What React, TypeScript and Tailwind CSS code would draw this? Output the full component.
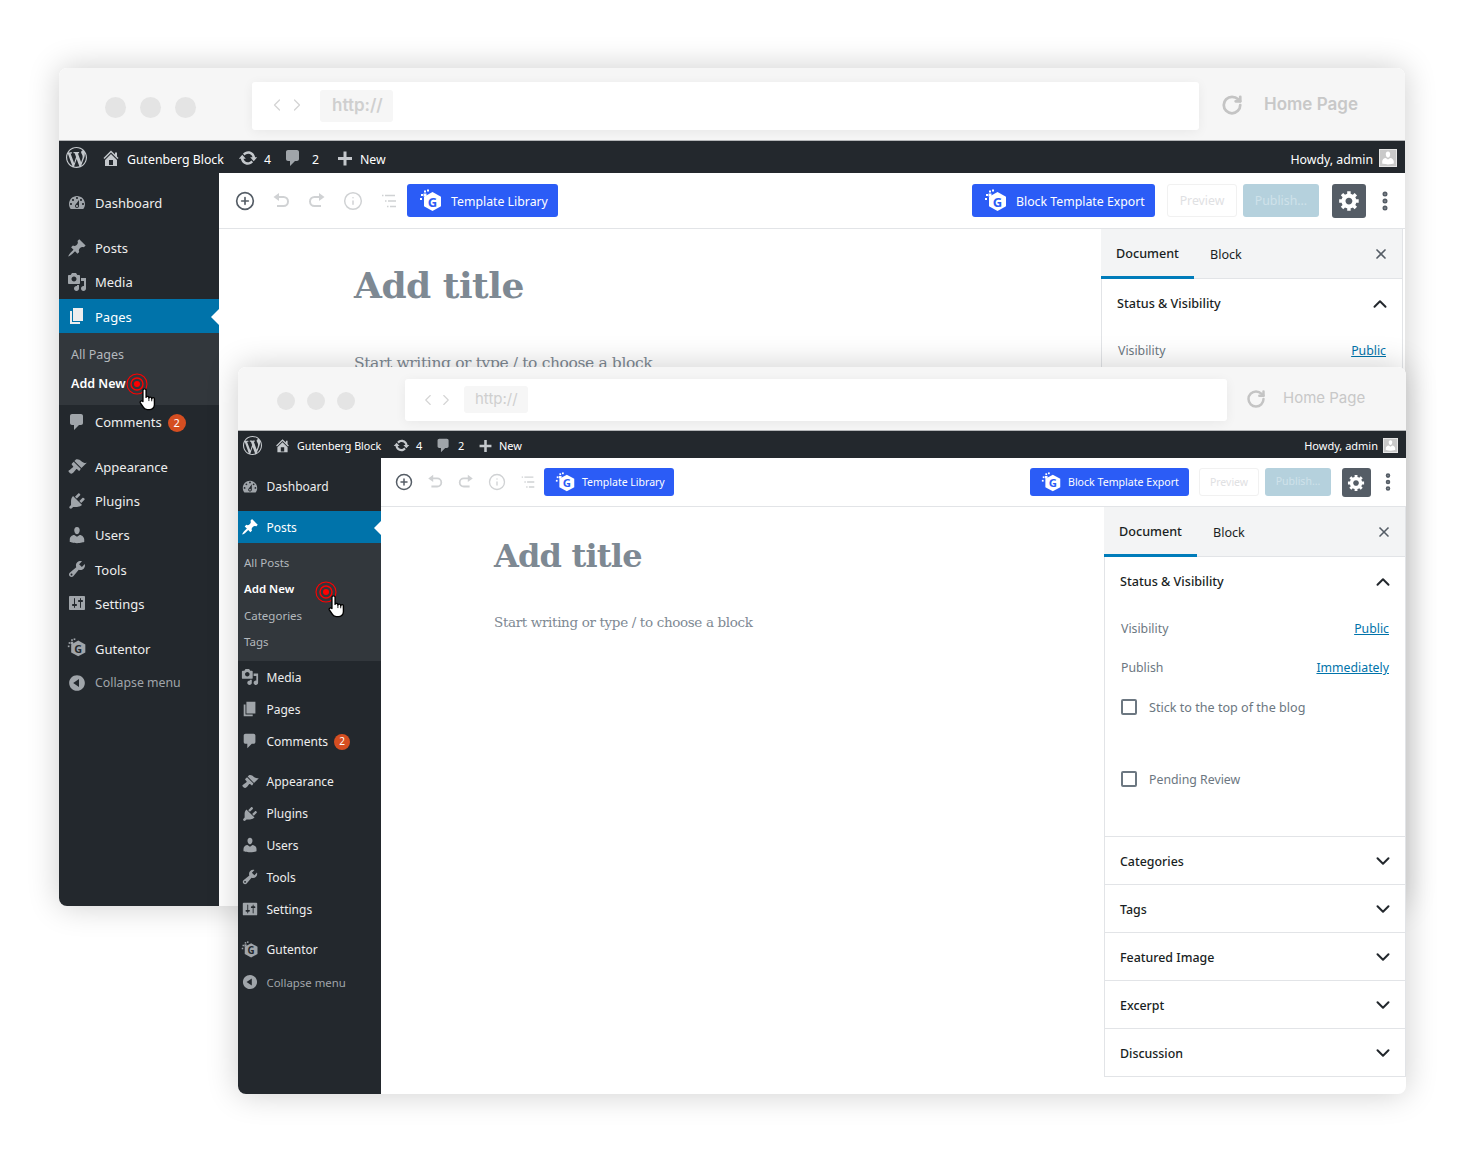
import { ChevronDown, ChevronLeft, ChevronRight, ChevronUp, CirclePlus, EllipsisVertical, Info, RotateCw, X } from 'lucide-react'

const paths = {
  dashboard:
    'M3.76 16h12.48c1.1-1.37 1.76-3.11 1.76-5 0-4.42-3.58-8-8-8s-8 3.58-8 8c0 1.89.66 3.63 1.76 5zM10 4c.55 0 1 .45 1 1s-.45 1-1 1-1-.45-1-1 .45-1 1-1zM6 6c.55 0 1 .45 1 1s-.45 1-1 1-1-.45-1-1 .45-1 1-1zm8 0c.55 0 1 .45 1 1s-.45 1-1 1-1-.45-1-1 .45-1 1-1zm-5.37 5.55L12 7v6c0 1.1-.9 2-2 2s-2-.9-2-2c0-.57.24-1.08.63-1.45zM4 10c.55 0 1 .45 1 1s-.45 1-1 1-1-.45-1-1 .45-1 1-1zm12 0c.55 0 1 .45 1 1s-.45 1-1 1-1-.45-1-1 .45-1 1-1zm-5 3c0-.55-.45-1-1-1s-1 .45-1 1 .45 1 1 1 1-.45 1-1z',
  pin: 'M10.44 3.02l1.82-1.82 6.36 6.35-1.83 1.82c-1.05-.68-2.48-.57-3.41.36l-.75.75c-.92.93-1.04 2.35-.35 3.41l-1.83 1.82-2.41-2.41-2.8 2.79c-.42.42-3.38 2.71-3.8 2.29s1.86-3.39 2.28-3.81l2.79-2.79L4.1 9.36l1.83-1.82c1.05.69 2.48.57 3.4-.36l.75-.75c.93-.92 1.05-2.35.36-3.41z',
  media:
    'M13 11V4c0-.55-.45-1-1-1h-1.67L9 1H5L3.67 3H2c-.55 0-1 .45-1 1v7c0 .55.45 1 1 1h10c.55 0 1-.45 1-1zM7 4.5c1.38 0 2.5 1.12 2.5 2.5S8.38 9.5 7 9.5 4.5 8.38 4.5 7 5.62 4.5 7 4.5zM14 6h5v10.5c0 1.38-1.12 2.5-2.5 2.5S14 17.88 14 16.5s1.12-2.5 2.5-2.5c.17 0 .34.02.5.05V9h-3V6zm-4 8.05V13h2v3.5c0 1.38-1.12 2.5-2.5 2.5S7 17.88 7 16.5 8.12 14 9.5 14c.17 0 .34.02.5.05z',
  page: 'M6 15V2h10v13H6zm-1 1h8v2H3V5h2v11z',
  comment: 'M5 2h9c1.1 0 2 .9 2 2v7c0 1.1-.9 2-2 2h-2l-5 5v-5H5c-1.1 0-2-.9-2-2V4c0-1.1.9-2 2-2z',
  appearance:
    'M14.48 11.06L7.41 3.99l1.5-1.5c.5-.56 2.3-.47 3.51.32 1.21.8 1.43 1.28 2.91 2.1 1.18.64 2.45 1.26 4.45.85zm-.71.71L6.7 4.7 4.93 6.47c-.39.39-.39 1.02 0 1.41l1.06 1.06c.39.39.39 1.03 0 1.42-.6.6-1.43 1.11-2.21 1.69-.35.26-.7.53-1.01.84C1.43 13.23.91 14.1 2.43 15.6c.1.1.21.2.32.29 1.46 1.27 2.59.81 3.67-.27.31-.31.58-.66.84-1.01.58-.78 1.09-1.61 1.69-2.21.39-.39 1.02-.39 1.41 0l1.06 1.06c.39.39 1.02.39 1.41 0z',
  plugins:
    'M13.11 4.36L9.87 7.6 8 5.73l3.24-3.24c.35-.34 1.05-.2 1.56.32.52.51.66 1.21.31 1.55zm-8 1.77l.91-1.12 9.01 9.01-1.19.84c-.71.71-2.63 1.16-3.82 1.16H6.14L4.9 17.26c-.59.59-1.54.59-2.12 0-.59-.58-.59-1.53 0-2.12l1.24-1.24v-3.88c0-1.13.4-3.19 1.09-3.89zm7.26 3.97l3.24-3.24c.34-.35 1.04-.21 1.55.31.52.51.66 1.21.31 1.55l-3.24 3.25z',
  users:
    'M10 9.25c-2.27 0-2.73-3.44-2.73-3.44C7 4.02 7.82 2 9.97 2c2.16 0 2.98 2.02 2.71 3.81 0 0-.41 3.44-2.68 3.44zm0 2.57L12.72 10c2.39 0 4.52 2.33 4.52 4.53v2.49s-3.65 1.13-7.24 1.13c-3.65 0-7.24-1.13-7.24-1.13v-2.49c0-2.25 1.94-4.48 4.47-4.48z',
  tools:
    'M16.68 9.77c-1.34 1.34-3.3 1.67-4.95.99l-5.41 6.52c-.99.99-2.59.99-3.58 0s-.99-2.59 0-3.57l6.52-5.42c-.68-1.65-.35-3.61.99-4.95 1.28-1.28 3.12-1.62 4.72-1.06l-2.89 2.89 2.82 2.82 2.86-2.87c.53 1.58.18 3.39-1.08 4.65zM3.81 16.21c.4.39 1.04.39 1.43 0 .4-.4.4-1.04 0-1.43-.39-.4-1.03-.4-1.43 0-.39.39-.39 1.03 0 1.43z',
  settings:
    'M18 16V4c0-.55-.45-1-1-1H3c-.55 0-1 .45-1 1v12c0 .55.45 1 1 1h14c.55 0 1-.45 1-1zM8 11h1c.55 0 1 .45 1 1s-.45 1-1 1H8v1.5c0 .28-.22.5-.5.5s-.5-.22-.5-.5V13H6c-.55 0-1-.45-1-1s.45-1 1-1h1V5.500c0-.28.22-.5.5-.5s.5.22.5.5V11zm5-2h-1c-.55 0-1-.45-1-1s.45-1 1-1h1V5.500c0-.28.22-.5.5-.5s.5.22.5.5V7h1c.55 0 1 .45 1 1s-.45 1-1 1h-1v5.500c0 .28-.22.5-.5.5s-.5-.22-.5-.5V9z',
  collapse:
    'M10 2.16c4.33 0 7.84 3.51 7.84 7.84s-3.51 7.84-7.84 7.84S2.16 14.33 2.16 10 5.67 2.16 10 2.16zm2 11.72V6.12L6.18 9.97z',
  update:
    'M10.2 3.28c3.53 0 6.43 2.61 6.92 6h2.08l-3.5 4-3.5-4h2.32c-.45-1.97-2.21-3.44-4.32-3.44-1.45 0-2.73.71-3.54 1.78L4.95 5.66C6.23 4.2 8.11 3.28 10.2 3.28zm-.4 13.44c-3.52 0-6.43-2.61-6.92-6H.8l3.5-4c1.17 1.33 2.33 2.67 3.5 4H5.48c.45 1.97 2.21 3.44 4.32 3.44 1.45 0 2.73-.71 3.54-1.78l1.71 1.95c-1.28 1.46-3.15 2.39-5.25 2.39z',
  home: 'M16 8.5l1.53 1.53-1.06 1.06L10 4.62l-6.47 6.47-1.06-1.06L10 2.5l4 4v-2h2v4zm-6-2.46l6 5.99V18H4v-5.97zM12 17v-5H8v5h4z',
  plus: 'M17 9v3h-5.500v5.500h-3V12H3V9h5.500V3.500h3V9H17z',
  wp: 'M20 10c0-5.51-4.49-10-10-10C4.48 0 0 4.49 0 10c0 5.52 4.48 10 10 10 5.51 0 10-4.48 10-10zM7.78 15.37L4.37 6.22c.55-.02 1.17-.08 1.17-.08.5-.06.44-1.13-.06-1.11 0 0-1.45.11-2.37.11-.18 0-.37 0-.58-.01C4.12 2.69 6.89 1.03 10 1.03c2.32 0 4.43.87 6.03 2.34-.68-.11-1.65.39-1.65 1.58 0 .74.45 1.36.9 2.1.35.61.55 1.36.55 2.46 0 1.49-1.4 5-1.4 5l-3.03-8.37c.54-.02.82-.17.82-.17.5-.05.44-1.25-.06-1.22 0 0-1.44.12-2.38.12-.87 0-2.33-.12-2.33-.12-.5-.03-.56 1.2-.06 1.22l.92.08 1.26 3.41zM17.41 10c.24-.64.74-1.87.43-4.25.7 1.29 1.05 2.71 1.05 4.25 0 3.29-1.73 6.24-4.4 7.78.97-2.59 1.94-5.21 2.92-7.78zM6.1 18.09C3.12 16.65 1.11 13.53 1.11 10c0-1.3.23-2.48.72-3.59C3.25 10.3 4.67 14.2 6.1 18.09zm4.03-6.63l2.58 6.98c-.86.29-1.76.45-2.71.45-.79 0-1.57-.11-2.29-.33.81-2.38 1.62-4.74 2.42-7.1z',
  gear: 'M18 12h-2.18c-.17.7-.44 1.35-.81 1.93l1.54 1.54-2.1 2.1-1.54-1.54c-.58.36-1.23.64-1.91.81V19H8v-2.180c-.68-.17-1.33-.45-1.91-.81l-1.54 1.54-2.12-2.12 1.54-1.54c-.36-.58-.63-1.22-.8-1.89H1V9h2.18c.17-.7.44-1.35.81-1.93L2.450 5.530l2.100-2.100 1.540 1.540c.58-.36 1.230-.64 1.910-.81V2h3v2.180c.68.17 1.330.45 1.910.81l1.540-1.540 2.120 2.120-1.540 1.540c.36.58.63 1.220.8 1.890H18v3zm-8.500 1.500c1.660 0 3-1.340 3-3s-1.340-3-3-3-3 1.340-3 3 1.340 3 3 3z',
}

type IconName = keyof typeof paths

function Dash({ name, className }: { name: IconName; className?: string }) {
  return (
    <svg viewBox="0 0 20 20" className={className} fill="currentColor" fillRule="evenodd">
      <path d={paths[name]} />
    </svg>
  )
}

function GutentorLogo({ className, fg, bg }: { className?: string; fg: string; bg: string }) {
  return (
    <svg viewBox="0 0 24 24" className={className}>
      <path d="M13.500 3l8.500 4.700v9.600L13.500 22 5 17.300V7.700z" fill={fg} />
      <rect x="2" y="5" width="2" height="2" fill={fg} />
      <rect x="5" y="1.500" width="2" height="2" fill={fg} />
      <rect x="8" y="0.500" width="2" height="2" fill={fg} />
      <rect x="1" y="9" width="2" height="2" fill={fg} />
      <rect x="4.500" y="4.500" width="3" height="3" fill={fg} />
      <text x="13.500" y="17.500" textAnchor="middle" fontSize="13" fontWeight="700" fontFamily="'Noto Sans', sans-serif" fill={bg}>
        G
      </text>
    </svg>
  )
}

function Target({ className }: { className?: string }) {
  return (
    <svg viewBox="0 0 22 22" className={className}>
      <circle cx="11" cy="11" r="10" fill="none" stroke="#f00" strokeWidth="1.100" />
      <circle cx="11" cy="11" r="6" fill="none" stroke="#f00" strokeWidth="1.400" />
      <circle cx="11" cy="11" r="3" fill="#f00" />
    </svg>
  )
}

function Hand({ className }: { className?: string }) {
  return (
    <svg viewBox="0 0 16 22" preserveAspectRatio="none" className={className} fill="#fff" stroke="#000" strokeWidth="1.200" strokeLinejoin="round">
      <path d="M3.500 2.200a1.400 1.400 0 0 1 2.800 0V9a1.300 1.300 0 0 1 2.500 0v.6a1.300 1.300 0 0 1 2.500.1v.7a1.200 1.200 0 0 1 2.400.2V16c0 2.500-2 4.800-4.500 4.800H7.500c-1.500 0-2.600-.7-3.400-2L1.200 14.200c-.7-1.300.9-2.500 2.300-1.200z" />
      <path d="M8.800 9v3.500M11.300 9.700v3M13.700 10.600v2.400" fill="none" strokeWidth="0.800" />
    </svg>
  )
}

function ListIcon({ className }: { className?: string }) {
  return (
    <svg viewBox="0 0 20 20" className={className} fill="none" stroke="currentColor" strokeWidth="1.500">
      <path d="M3 4.500h1.500M6 4.500h10M6 10h1.500M9 10h8M8 15.500h1.500M11 15.500h6" />
    </svg>
  )
}

const variants = {
  back: {
    root: 'left-[59px] top-[68px] w-[1346px] h-[838px]',
    chrome: 'h-[73px] border-b border-[#b4b6b8]',
    dots: 'w-[193px] gap-[14px] pl-[46px] mt-[6px]',
    dot: 'size-[21px]',
    url: 'w-[947px] h-[48px] pl-[15px] mt-[3px]',
    navIcon: 'size-[20px] mt-[-2px]',
    nav: 'w-[53px] gap-0',
    chip: 'w-[73px] h-[32px] text-[17px] font-semibold pl-[12px]',
    reload: 'ml-[22px] size-[22px] mt-[2px]',
    home: 'ml-[21px] text-[17px] font-semibold mt-[2px]',
    bar: 'h-[32px] text-[12.300px] pl-[7px] pr-[8px] pt-[7px]',
    wp: 'size-[21px] mt-[-6px]',
    homeIcon: 'size-[20px] ml-[14px] mt-[-6px]',
    barTitle: 'ml-[6px] w-[108px]',
    barIcon: 'size-[20px] mt-[-6px]',
    updates: 'gap-[6px] w-[45px]',
    comments: 'gap-[9px] w-[52px]',
    news: 'gap-[5px]',
    howdy: 'gap-[6px]',
    avatar: 'size-[18px] mt-[-6px]',
    body: 'h-[733px]',
    side: 'w-[160px] pt-[13px]',
    row: 'h-[34.100px] text-[13px] pl-[8px] pt-[2px]',
    dimLabel: 'text-[12.300px]',
    rowIcon: 'size-[20px] mr-[8px] mt-[-2px]',
    gap: 'mt-[11px]',
    sub: 'pl-[12px] pt-[7.500px] pb-[6px] text-[12.500px]',
    subRow: 'h-[29px]',
    arrow: 'border-y-[8px] border-r-[8px]',
    badge: 'size-[18px] ml-[6px] text-[11px]',
    toolbar: 'h-[56px] pl-[16px] pr-[8px]',
    toolIcon: 'size-[20px]',
    tools: 'gap-[16px]',
    tplBtn: 'w-[151px] h-[33px] ml-[8px] text-[12.300px] pl-[12px] gap-[8px]',
    exportBtn: 'w-[183px] h-[33px] text-[12.300px] pl-[12px] gap-[8px]',
    btnText: 'pt-[3px]',
    logo: 'size-[24px]',
    right: 'gap-[12px]',
    preview: 'w-[70px] h-[33px] text-[12.300px] pt-[2px]',
    publish: 'w-[76px] h-[33px] text-[12.300px] ml-[-6px] pt-[1px]',
    gearBtn: 'size-[34px] ml-[1px]',
    gear: 'size-[23px]',
    dotsBtn: 'size-[24px] ml-[-5px]',
    content: 'pl-[135px] pt-[30px]',
    title: 'text-[36px] leading-[52px] tracking-[-0.500px]',
    lead: 'mt-[40px] text-[15.500px] leading-[24px] tracking-[-0.370px]',
    panel: 'w-[302px] mr-[2px]',
  },
  front: {
    root: 'left-[238px] top-[367px] w-[1168px] h-[727px]',
    chrome: 'h-[64px] border-b border-[#b4b6b8]',
    dots: 'w-[167px] gap-[12px] pl-[39px] mt-[4px]',
    dot: 'size-[18px]',
    url: 'w-[822px] h-[42px] pl-[14px] mt-[2px]',
    navIcon: 'size-[18px]',
    nav: 'w-[45px] gap-0',
    chip: 'w-[64px] h-[27px] text-[15px] pl-[11px]',
    reload: 'ml-[19px] size-[20px]',
    home: 'ml-[17px] text-[15px]',
    bar: 'h-[27px] text-[11px] pl-[5px] pr-[8px] pt-[4px]',
    wp: 'size-[19px] mt-[-3px]',
    homeIcon: 'size-[17px] ml-[12px] mt-[-3px]',
    barTitle: 'ml-[6px] w-[93px] text-[10.700px]',
    barIcon: 'size-[17px] mt-[-3px]',
    updates: 'gap-[6px] w-[42px]',
    comments: 'gap-[6px] w-[42px]',
    news: 'gap-[5px]',
    howdy: 'gap-[5px]',
    avatar: 'size-[15px] mt-[-3px]',
    body: 'h-[636px]',
    side: 'w-[143px] pt-[12px]',
    row: 'h-[31.800px] text-[12px] pl-[3px] pt-[2.500px]',
    dimLabel: 'text-[11.400px]',
    rowIcon: 'size-[18px] mr-[7.500px] mt-[-1px]',
    gap: 'mt-[9px]',
    sub: 'pl-[6px] pt-[7px] pb-[6px] text-[11.500px]',
    subRow: 'h-[26.300px]',
    arrow: 'border-y-[7px] border-r-[7px]',
    badge: 'size-[16px] ml-[6px] text-[10px]',
    toolbar: 'h-[49px] pl-[14px] pr-[7px]',
    toolIcon: 'size-[18px]',
    tools: 'gap-[13px]',
    tplBtn: 'w-[130px] h-[28px] ml-[7px] text-[10.500px] pl-[11px] gap-[6px]',
    exportBtn: 'w-[159px] h-[28px] text-[10.600px] pl-[11px] gap-[6px]',
    btnText: 'pt-[2px]',
    logo: 'size-[21px]',
    right: 'gap-[10px]',
    preview: 'w-[60px] h-[28px] text-[10.500px] pt-[2px]',
    publish: 'w-[66px] h-[28px] text-[10.500px] ml-[-4px]',
    gearBtn: 'size-[29px] ml-[1px]',
    gear: 'size-[19px]',
    dotsBtn: 'size-[22px] ml-[-4px]',
    content: 'pl-[113px] pt-[25px]',
    title: 'text-[32px] leading-[48px] tracking-[-0.800px]',
    lead: 'mt-[31px] text-[13.500px] leading-[22px] tracking-[-0.350px]',
    panel: 'w-[302px]',
  },
}

type V = (typeof variants)['back']

type MenuItem = { icon: IconName | 'gutentor'; label: string; gap?: boolean; badge?: boolean; dim?: boolean; active?: boolean; sub?: string[] }

const backMenu: MenuItem[] = [
  { icon: 'dashboard', label: 'Dashboard' },
  { icon: 'pin', label: 'Posts', gap: true },
  { icon: 'media', label: 'Media' },
  { icon: 'page', label: 'Pages', active: true, sub: ['All Pages', 'Add New'] },
  { icon: 'comment', label: 'Comments', badge: true },
  { icon: 'appearance', label: 'Appearance', gap: true },
  { icon: 'plugins', label: 'Plugins' },
  { icon: 'users', label: 'Users' },
  { icon: 'tools', label: 'Tools' },
  { icon: 'settings', label: 'Settings' },
  { icon: 'gutentor', label: 'Gutentor', gap: true },
  { icon: 'collapse', label: 'Collapse menu', dim: true },
]

const frontMenu: MenuItem[] = [
  { icon: 'dashboard', label: 'Dashboard' },
  { icon: 'pin', label: 'Posts', gap: true, active: true, sub: ['All Posts', 'Add New', 'Categories', 'Tags'] },
  { icon: 'media', label: 'Media' },
  { icon: 'page', label: 'Pages' },
  { icon: 'comment', label: 'Comments', badge: true },
  { icon: 'appearance', label: 'Appearance', gap: true },
  { icon: 'plugins', label: 'Plugins' },
  { icon: 'users', label: 'Users' },
  { icon: 'tools', label: 'Tools' },
  { icon: 'settings', label: 'Settings' },
  { icon: 'gutentor', label: 'Gutentor', gap: true },
  { icon: 'collapse', label: 'Collapse menu', dim: true },
]

function BrowserChrome({ v }: { v: V }) {
  return (
    <div className={`flex items-center bg-[#f6f6f6] rounded-t-[8px] ${v.chrome}`}>
      <div className={`flex items-center shrink-0 ${v.dots}`}>
        <span className={`rounded-full bg-[#e4e4e4] ${v.dot}`} />
        <span className={`rounded-full bg-[#e4e4e4] ${v.dot}`} />
        <span className={`rounded-full bg-[#e4e4e4] ${v.dot}`} />
      </div>
      <div className={`flex items-center bg-white rounded-[3px] shadow-[0_2px_12px_rgba(0,0,0,0.06)] ${v.url}`}>
        <div className={`flex items-center text-[#d4d4d4] ${v.nav}`}>
          <ChevronLeft className={v.navIcon} strokeWidth={1.500} />
          <ChevronRight className={v.navIcon} strokeWidth={1.500} />
        </div>
        <div className={`flex items-center rounded-[3px] bg-[#f6f6f6] text-[#cfcfcf] ${v.chip}`} style={{ fontFamily: 'Inter, sans-serif' }}>
          http://
        </div>
      </div>
      <RotateCw className={`text-[#c4c4c4] ${v.reload}`} strokeWidth={3} />
      <span className={`text-[#c8c8c8] ${v.home}`} style={{ fontFamily: 'Inter, sans-serif' }}>
        Home Page
      </span>
    </div>
  )
}

function AdminBar({ v }: { v: V }) {
  return (
    <div className={`flex items-center justify-between whitespace-nowrap bg-[#23282d] text-white ${v.bar}`}>
      <div className="flex items-center">
        <Dash name="wp" className={`text-[#c4c8cc] ${v.wp}`} />
        <Dash name="home" className={`text-[#c4c8cc] ${v.homeIcon}`} />
        <span className={v.barTitle}>Gutenberg Block</span>
        <span className={`flex items-center ${v.updates} ml-[3px]`}>
          <Dash name="update" className={`text-[#c4c8cc] ${v.barIcon}`} />4
        </span>
        <span className={`flex items-center ${v.comments}`}>
          <Dash name="comment" className={`text-[#a0a5aa] ${v.barIcon}`} />2
        </span>
        <span className={`flex items-center ${v.news}`}>
          <Dash name="plus" className={`text-[#c4c8cc] ${v.barIcon}`} />
          New
        </span>
      </div>
      <div className={`flex items-center ${v.howdy}`}>
        Howdy, admin
        <span className={`flex items-end justify-center overflow-hidden bg-[#c9c9c9] border border-[#e5e5e5] ${v.avatar}`}>
          <Dash name="users" className="size-full text-white" />
        </span>
      </div>
    </div>
  )
}

function SideMenu({ v, items, isBack }: { v: V; items: MenuItem[]; isBack: boolean }) {
  return (
    <aside className={`shrink-0 bg-[#23282d] ${v.side}`}>
      {items.map((item) => (
        <div key={item.label} className={item.gap ? v.gap : ''}>
          <div className={`relative flex items-center ${v.row} ${item.active ? 'bg-[#0073aa] text-white' : item.dim ? 'text-[#a0a5aa]' : 'text-[#eeeeee]'}`}>
            {item.icon === 'gutentor' ? (
              <GutentorLogo className={`shrink-0 ${v.rowIcon}`} fg="#a0a5aa" bg="#23282d" />
            ) : (
              <Dash name={item.icon} className={`shrink-0 ${v.rowIcon} ${item.active && !isBack ? 'text-white' : item.active ? 'text-[#eeeeee]' : 'text-[#a0a5aa]'}`} />
            )}
            <span className={item.dim ? v.dimLabel : ''}>{item.label}</span>
            {item.badge && <span className={`flex items-center justify-center rounded-full bg-[#d54e21] text-white ${v.badge}`}>2</span>}
            {item.active && <span className={`absolute right-0 border-y-transparent border-r-white ${v.arrow}`} />}
          </div>
          {item.sub && (
            <div className={`bg-[#32373c] ${v.sub}`}>
              {item.sub.map((s) => (
                <div key={s} className={`flex items-center ${v.subRow} ${s === 'Add New' ? 'text-white font-semibold' : 'text-[#b4b9be]'}`}>
                  {s}
                </div>
              ))}
            </div>
          )}
        </div>
      ))}
    </aside>
  )
}

function Toolbar({ v }: { v: V }) {
  return (
    <div className={`flex items-center justify-between border-b border-[#e2e4e7] bg-white ${v.toolbar}`}>
      <div className="flex items-center">
        <div className={`flex items-center text-[#d0d2d4] ${v.tools}`}>
          <CirclePlus className={`text-[#555d66] ${v.toolIcon}`} strokeWidth={2} />
          <svg viewBox="0 0 20 20" className={v.toolIcon} fill="currentColor">
            <path d="M8 2v3h4.500a5.500 5.500 0 0 1 0 11H6v-2h6.500a3.500 3.500 0 0 0 0-7H8v3L2.500 6z" />
          </svg>
          <svg viewBox="0 0 20 20" className={v.toolIcon} fill="currentColor">
            <path d="M12 2v3H7.500a5.500 5.500 0 0 0 0 11H14v-2H7.500a3.500 3.500 0 0 1 0-7H12v3l5.500-4z" />
          </svg>
          <Info className={v.toolIcon} strokeWidth={1.800} />
          <ListIcon className={v.toolIcon} />
        </div>
        <button className={`flex items-center rounded-[3px] bg-[#2b5cf6] text-white ${v.tplBtn}`}>
          <GutentorLogo className={v.logo} fg="#ffffff" bg="#2b5cf6" />
          <span className={v.btnText}>Template Library</span>
        </button>
      </div>
      <div className={`flex items-center ${v.right}`}>
        <button className={`flex items-center rounded-[3px] bg-[#2b5cf6] text-white ${v.exportBtn}`}>
          <GutentorLogo className={v.logo} fg="#ffffff" bg="#2b5cf6" />
          <span className={v.btnText}>Block Template Export</span>
        </button>
        <span className={`flex items-center justify-center rounded-[3px] border border-[#f1f1f1] text-[#dfe1e3] ${v.preview}`}>Preview</span>
        <span className={`flex items-center justify-center rounded-[3px] bg-[#b5d1dd] text-[#cfe2ea] ${v.publish}`}>Publish...</span>
        <span className={`flex items-center justify-center rounded-[3px] bg-[#555d66] text-white ${v.gearBtn}`}>
          <Dash name="gear" className={v.gear} />
        </span>
        <EllipsisVertical className={`text-[#555d66] ${v.dotsBtn}`} strokeWidth={3} />
      </div>
    </div>
  )
}

function Collapsed({ label }: { label: string }) {
  return (
    <div className="flex items-center justify-between h-[48px] border-t border-[#e2e4e7] pl-[15px] pr-[11px] text-[12.400px] font-medium text-[#191e23]">
      <span className="pt-[3px]">{label}</span>
      <ChevronDown className="size-[22px] text-[#23282d]" strokeWidth={2.200} />
    </div>
  )
}

function Panel({ v, full }: { v: V; full: boolean }) {
  return (
    <div className={`flex flex-col self-start shrink-0 border-x border-[#e2e4e7] bg-white ${v.panel}`}>
      <div className="flex items-center justify-between h-[50px] bg-[#f3f4f5] border-b border-[#e2e4e7] pr-[13px] text-[12.600px] text-[#191e23] ml-[-1px]">
        <div className="flex h-full">
          <span className="flex items-center justify-center w-[93px] h-[50px] pt-[4px] border-b-[3px] border-[#007cba] font-medium">Document</span>
          <span className="flex items-center justify-center ml-[16px] pt-[3px]">Block</span>
        </div>
        <X className="size-[16px] text-[#555d66]" strokeWidth={2.500} />
      </div>
      <div className="flex items-center justify-between h-[50px] pl-[15px] pr-[11px] text-[12.600px] font-medium text-[#191e23]">
        Status &amp; Visibility
        <ChevronUp className="size-[22px] text-[#23282d]" strokeWidth={2.200} />
      </div>
      <div className="flex flex-col px-[16px] text-[12.300px] text-[#6c7781]">
        <div className="flex items-center justify-between h-[39px] mt-[2px] pt-[2px]">
          Visibility
          <a className="text-[#0073aa] underline">Public</a>
        </div>
        {full && (
          <>
            <div className="flex items-center justify-between h-[39px] pt-[2px]">
              Publish
              <a className="text-[#0073aa] underline">Immediately</a>
            </div>
            <div className="flex items-center h-[41px] gap-[12px] text-[12.600px]">
              <span className="size-[16px] rounded-[2px] border-2 border-[#6c7781] mt-[-1px]" />
              <span className="pt-[1px]">Stick to the top of the blog</span>
            </div>
            <div className="flex items-center h-[41px] gap-[12px] mt-[31px]">
              <span className="size-[16px] rounded-[2px] border-2 border-[#6c7781] mt-[-1px]" />
              <span className="pt-[1px]">Pending Review</span>
            </div>
          </>
        )}
      </div>
      {full && (
        <div className="mt-[36px] border-b border-[#e2e4e7]">
          {['Categories', 'Tags', 'Featured Image', 'Excerpt', 'Discussion'].map((label) => (
            <Collapsed key={label} label={label} />
          ))}
        </div>
      )}
    </div>
  )
}

function BrowserWindow({ v, items, isBack, overlay }: { v: V; items: MenuItem[]; isBack: boolean; overlay: React.ReactNode }) {
  return (
    <div className={`absolute overflow-hidden rounded-[8px] bg-white shadow-[0_0_32px_rgba(0,0,0,0.2)] ${v.root}`}>
      <BrowserChrome v={v} />
      <AdminBar v={v} />
      <div className={`flex ${v.body}`}>
        <SideMenu v={v} items={items} isBack={isBack} />
        <div className="flex flex-col flex-1 min-w-0">
          <Toolbar v={v} />
          <div className="flex flex-1 min-h-0 justify-between">
            <div className={v.content} style={{ fontFamily: '"DejaVu Serif", serif' }}>
              <h1 className={`font-bold text-[#7e8993] ${v.title}`}>Add title</h1>
              <p className={`text-[#7e8993] ${v.lead}`}>Start writing or type / to choose a block</p>
            </div>
            <Panel v={v} full={!isBack} />
          </div>
        </div>
      </div>
      {overlay}
    </div>
  )
}

export default function App() {
  return (
    <div className="relative w-[1470px] h-[1152px] overflow-hidden bg-white" style={{ fontFamily: '"Noto Sans", sans-serif' }}>
      <BrowserWindow
        v={variants.back}
        items={backMenu}
        isBack
        overlay={
          <>
            <Target className="absolute left-[67px] top-[305px] size-[22px]" />
            <Hand className="absolute left-[80px] top-[320px] w-[18px] h-[23px]" />
          </>
        }
      />
      <BrowserWindow
        v={variants.front}
        items={frontMenu}
        isBack={false}
        overlay={
          <>
            <Target className="absolute left-[77px] top-[214px] size-[22px]" />
            <Hand className="absolute left-[90px] top-[228px] w-[18px] h-[23px]" />
          </>
        }
      />
    </div>
  )
}
